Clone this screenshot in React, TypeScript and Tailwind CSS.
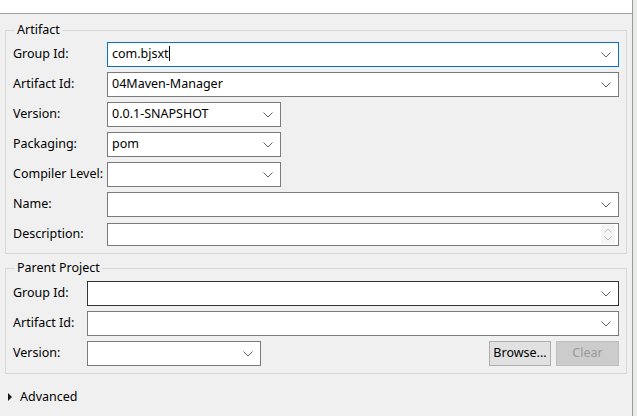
import React from 'react';

const font = { fontFamily: '"Noto Sans", "Liberation Sans", sans-serif' };

function Chevron() {
  return (
    <svg width="10" height="6" viewBox="0 0 10 6" className="shrink-0">
      <path d="M0.5 0.5 L5 5 L9.5 0.5" fill="none" stroke="#606060" strokeWidth="1" />
    </svg>
  );
}

function Combo({
  value,
  w,
  focus,
  dark,
}: {
  value?: string;
  w: string;
  focus?: boolean;
  dark?: boolean;
}) {
  const border = focus ? 'border-[#0a70c6]' : dark ? 'border-[#333333]' : 'border-[#7a7a7a]';
  return (
    <div className={`${w} h-[25px] bg-white border ${border} flex items-center pl-[4px] pr-[7px]`}>
      <span className="flex-1 text-[12.5px] text-black leading-none">
        {value}
        {focus && <span className="inline-block w-px h-[15px] bg-black align-middle -mt-[2px]" />}
      </span>
      <Chevron />
    </div>
  );
}

function Row({ label, children }: { label: string; children: React.ReactNode }) {
  return (
    <div className="flex items-center h-[25px]">
      <span className="text-[12.5px] text-black w-[94px] shrink-0">{label}</span>
      {children}
    </div>
  );
}

function Row2({ label, children }: { label: string; children: React.ReactNode }) {
  return (
    <div className="flex items-center h-[25px]">
      <span className="text-[12.5px] text-black w-[74px] shrink-0">{label}</span>
      {children}
    </div>
  );
}

export default function App() {
  return (
    <div className="w-[637px] h-[416px] bg-[#f0f0f0] flex overflow-hidden" style={font}>
      <div className="w-[633px] flex flex-col border-r border-[#9a9a9a]">
        <div className="h-[14px] bg-white border-b border-[#a0a0a0] shrink-0" />

        {/* Artifact */}
        <fieldset className="ml-[5px] mr-[5px] mt-[9px] border border-[#d8d8d8] pl-[7px] pr-[7px] pb-[6px] pt-[0px]">
          <legend className="text-[12.5px] text-black px-[2px] ml-[2px] leading-[14px]">Artifact</legend>
          <div className="flex flex-col gap-[5px] pt-[5px]">
            <Row label="Group Id:">
              <Combo value="com.bjsxt" w="flex-1" focus />
            </Row>
            <Row label="Artifact Id:">
              <Combo value="04Maven-Manager" w="flex-1" />
            </Row>
            <Row label="Version:">
              <Combo value="0.0.1-SNAPSHOT" w="w-[174px]" />
            </Row>
            <Row label="Packaging:">
              <Combo value="pom" w="w-[174px]" />
            </Row>
            <Row label="Compiler Level:">
              <Combo w="w-[174px]" />
            </Row>
            <Row label="Name:">
              <Combo w="flex-1" />
            </Row>
            <Row label="Description:">
              <div className="flex-1 h-[23px] bg-white border border-[#7a7a7a] flex items-center justify-end pr-[3px]">
                <div className="w-[14px] h-[19px] bg-[#f4f4f4] flex flex-col items-center justify-center gap-[3px]">
                  <svg width="8" height="5" viewBox="0 0 8 5">
                    <path d="M0.5 4.5 L4 1 L7.5 4.5" fill="none" stroke="#c4c4c4" strokeWidth="1" />
                  </svg>
                  <svg width="8" height="5" viewBox="0 0 8 5">
                    <path d="M0.5 0.5 L4 4 L7.5 0.5" fill="none" stroke="#c4c4c4" strokeWidth="1" />
                  </svg>
                </div>
              </div>
            </Row>
          </div>
        </fieldset>

        {/* Parent Project */}
        <fieldset className="ml-[5px] mr-[5px] mt-[7px] border border-[#d8d8d8] pl-[7px] pr-[7px] pb-[7px]">
          <legend className="text-[12.5px] text-black px-[2px] ml-[2px] leading-[14px]">Parent Project</legend>
          <div className="flex flex-col gap-[5px] pt-[6px]">
            <Row2 label="Group Id:">
              <Combo w="flex-1" dark />
            </Row2>
            <Row2 label="Artifact Id:">
              <Combo w="flex-1" />
            </Row2>
            <Row2 label="Version:">
              <Combo w="w-[174px]" />
              <div className="flex-1" />
              <button className="w-[62px] h-[25px] bg-[#e1e1e1] border border-[#adadad] text-[12.5px] text-black leading-none">
                Browse...
              </button>
              <button className="ml-[5px] w-[63px] h-[25px] bg-[#cccccc] border border-[#bfbfbf] text-[12.5px] text-[#9a9a9a] leading-none">
                Clear
              </button>
            </Row2>
          </div>
        </fieldset>

        <div className="flex items-center mt-[14px] ml-[8px] gap-[8px]">
          <svg width="4" height="8" viewBox="0 0 4 8">
            <path d="M0 0 L4 4 L0 8 Z" fill="#1a1a1a" />
          </svg>
          <span className="text-[12.5px] text-black">Advanced</span>
        </div>
      </div>
      <div className="flex-1 bg-[#e8ece8]" />
    </div>
  );
}
